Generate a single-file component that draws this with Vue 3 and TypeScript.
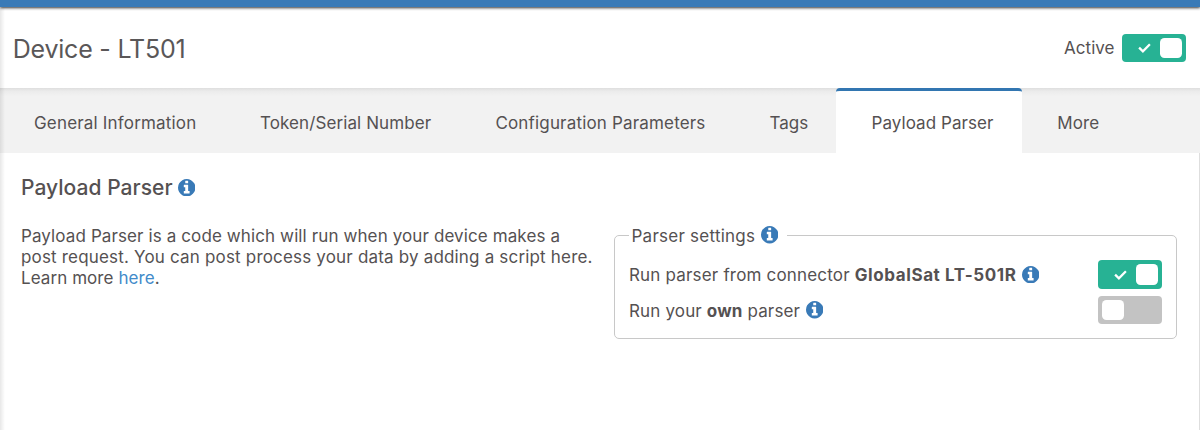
<script setup lang="ts">
import { defineComponent, h, ref } from 'vue'

const INFO_PATH =
  'M1024 1376v-160q0-14-9-23t-23-9h-96v-512q0-14-9-23t-23-9h-320q-14 0-23 9t-9 23v160q0 14 9 23t23 9h96v320h-96q-14 0-23 9t-9 23v160q0 14 9 23t23 9h448q14 0 23-9t9-23zm-128-896v-160q0-14-9-23t-23-9h-192q-14 0-23 9t-9 23v160q0 14 9 23t23 9h192q14 0 23-9t9-23zm640 416q0 209-103 385.500t-279.500 279.500-385.500 103-385.500-103-279.500-279.500-103-385.500 103-385.500 279.500-279.500 385.500-103 385.500 103 279.500 279.500 103 385.500z'

const InfoIcon = defineComponent({
  render: () =>
    h('svg', { class: 'info', viewBox: '0 128 1536 1536', 'aria-hidden': 'true' }, [
      h('path', { d: INFO_PATH, fill: 'currentColor' }),
    ]),
})

const ToggleSwitch = defineComponent({
  props: { modelValue: { type: Boolean, required: true } },
  emits: ['update:modelValue'],
  setup(props, { emit }) {
    return () =>
      h(
        'button',
        {
          class: ['toggle', { on: props.modelValue }],
          type: 'button',
          role: 'switch',
          'aria-checked': props.modelValue,
          onClick: () => emit('update:modelValue', !props.modelValue),
        },
        [
          props.modelValue
            ? h('svg', { class: 'check', viewBox: '0 0 13 10' }, [
                h('path', {
                  d: 'M1.1 4.6 L4.9 8.3 L11.9 1.3',
                  fill: 'none',
                  stroke: '#fff',
                  'stroke-width': 2.3,
                }),
              ])
            : null,
          h('span', { class: 'knob' }),
        ],
      )
  },
})

interface Tab {
  id: string
  label: string
}

const tabs: Tab[] = [
  { id: 'general', label: 'General Information' },
  { id: 'token', label: 'Token/Serial Number' },
  { id: 'config', label: 'Configuration Parameters' },
  { id: 'tags', label: 'Tags' },
  { id: 'parser', label: 'Payload Parser' },
  { id: 'more', label: 'More' },
]

const activeTab = ref('parser')
const deviceActive = ref(true)
const connectorParser = ref(true)
const ownParser = ref(false)
</script>

<template>
  <div class="page">
    <div class="topbar"></div>
    <header class="header">
      <h1>Device - LT501</h1>
      <div class="status">
        <span class="status-label">Active</span>
        <ToggleSwitch v-model="deviceActive" />
      </div>
    </header>
    <nav class="tabs">
      <div
        v-for="tab in tabs"
        :key="tab.id"
        class="tab"
        :class="[tab.id, { active: tab.id === activeTab }]"
        @click="activeTab = tab.id"
      >
        <span>{{ tab.label }}</span>
      </div>
    </nav>
    <main class="content">
      <section class="intro">
        <h2><span>Payload Parser</span><InfoIcon /></h2>
        <p>
          <span class="l1">Payload Parser is a code which will run when your device makes a</span><br />
          <span class="l2">post request. You can post process your data by adding a script here.</span><br />
          <span class="l3">Learn more <a>here</a>.</span>
        </p>
      </section>
      <fieldset class="settings">
        <legend><span class="legend-label">Parser settings</span><InfoIcon /></legend>
        <div class="row">
          <span class="connector">Run parser from connector <b>GlobalSat LT-501R</b></span><InfoIcon />
          <ToggleSwitch v-model="connectorParser" />
        </div>
        <div class="row">
          <span class="own">Run your <b>own</b> parser</span><InfoIcon />
          <ToggleSwitch v-model="ownParser" />
        </div>
      </fieldset>
    </main>
  </div>
</template>

<style>
html,
body {
  overflow: hidden;
  background: #fff;
}
</style>

<style scoped>
.page {
  position: relative;
  display: flex;
  flex-direction: column;
  width: 1200px;
  height: 430px;
  overflow: hidden;
  background: #fff;
  color: #555152;
  font: 17px/21.3px Inter, 'Liberation Sans', sans-serif;
  white-space: nowrap;
}
.page::before {
  content: '';
  position: absolute;
  z-index: 1;
  inset: 8px auto 0 0;
  width: 5px;
  background: linear-gradient(90deg, rgba(0, 0, 0, 0.09), rgba(0, 0, 0, 0));
  pointer-events: none;
}
.page::after {
  content: '';
  position: absolute;
  z-index: 1;
  inset: 153px 0 0 auto;
  width: 1px;
  background: #dedede;
}
.topbar {
  position: relative;
  z-index: 2;
  flex: none;
  height: 7px;
  background: #397ab7;
  box-shadow: 0 1px 3px rgba(0, 0, 0, 0.8);
}
.header {
  flex: none;
  display: flex;
  align-items: center;
  justify-content: space-between;
  height: 81px;
  padding: 1px 14px 0 12.7px;
  box-sizing: border-box;
}
h1 {
  margin: 1px 0 0;
  font-size: 25px;
  line-height: 32px;
  font-weight: 400;
  letter-spacing: -0.21px;
  color: #5a5758;
}
.status {
  display: flex;
  align-items: center;
  gap: 7.5px;
}
.status-label {
  padding-top: 2px;
  letter-spacing: 0.03px;
}
.tabs {
  flex: none;
  display: grid;
  grid-template-columns: 225px 235px 274.5px 101.5px 186px 1fr;
  height: 65px;
  background: linear-gradient(#dedede, #ebebeb 3px, #f2f2f2 8px);
}
.tab {
  padding: 25px 0 0 35px;
  cursor: pointer;
}
.tab.general {
  padding-left: 34px;
  letter-spacing: 0.18px;
}
.tab.token {
  letter-spacing: 0.1px;
}
.tab.config {
  padding-left: 35.4px;
  letter-spacing: 0.17px;
}
.tab.parser {
  padding-left: 35.5px;
  letter-spacing: 0.06px;
}
.tab.more {
  padding-left: 35.3px;
  letter-spacing: 0.08px;
}
.tab.active {
  padding-top: 22px;
  border-top: 3px solid #3276b1;
  border-radius: 4px 4px 0 0;
  background: #fff;
}
.content {
  display: flex;
  align-items: flex-start;
  padding: 24px 23px 0 21px;
}
.intro {
  width: 593px;
}
h2 {
  display: flex;
  align-items: center;
  gap: 5.3px;
  margin: 0;
  font-size: 21px;
  line-height: 22px;
  font-weight: 500;
  letter-spacing: 0.04px;
}
h2 :deep(.info) {
  margin-bottom: 1px;
}
p {
  margin: 26.5px 0 0;
}
.l1 {
  letter-spacing: 0.11px;
}
.l2 {
  letter-spacing: 0.18px;
}
.l3 {
  letter-spacing: 0.07px;
}
a {
  color: #428bca;
}
:deep(.info) {
  flex: none;
  width: 17.4px;
  height: 17.4px;
  color: #397ab7;
}
.settings {
  flex: 1;
  min-width: 0;
  height: 114px;
  margin: 48px 0 0;
  padding: 0 14px;
  box-sizing: border-box;
  border: 1.4px solid #c8c8c8;
  border-radius: 5px;
}
legend {
  display: flex;
  align-items: center;
  gap: 5.5px;
  width: 158px;
  box-sizing: border-box;
  padding: 0 0 0 2.5px;
}
.legend-label {
  height: 21.3px;
  line-height: 23.3px;
  letter-spacing: 0.25px;
}
legend :deep(.info) {
  margin-bottom: 1px;
}
.row {
  display: flex;
  align-items: center;
  gap: 5.5px;
  height: 28.5px;
  margin-top: 7px;
}
legend + .row {
  margin-top: 14px;
}
.row > span {
  padding-top: 3.2px;
}
.connector {
  letter-spacing: 0.18px;
}
.connector b {
  letter-spacing: 0.59px;
}
.own {
  letter-spacing: 0.15px;
}
.row :deep(.toggle) {
  margin-left: auto;
}
b {
  font-weight: 700;
}
:deep(.toggle) {
  position: relative;
  flex: none;
  width: 64px;
  height: 28.5px;
  padding: 0;
  border: 0;
  border-radius: 4px;
  background: #c3c3c3;
  cursor: pointer;
}
:deep(.toggle.on) {
  background: #27b294;
}
:deep(.knob) {
  position: absolute;
  top: 4px;
  left: 4px;
  width: 22px;
  height: 20.5px;
  border-radius: 4.5px;
  background: #fff;
}
:deep(.toggle.on .knob) {
  left: 38px;
}
:deep(.check) {
  position: absolute;
  top: 9.5px;
  left: 15.5px;
  width: 13px;
  height: 10px;
}
</style>
